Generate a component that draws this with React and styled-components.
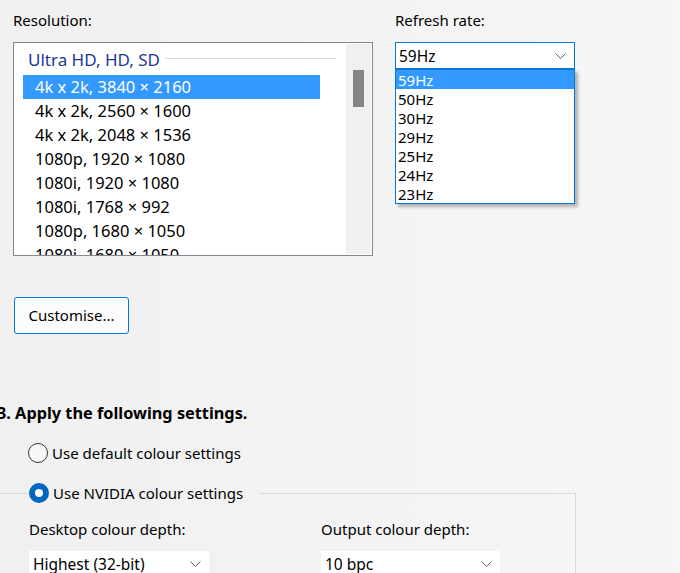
import React from 'react';
import styled, { createGlobalStyle } from 'styled-components';

const GlobalStyle = createGlobalStyle`
  html, body {
    margin: 0;
    padding: 0;
  }
  body {
    width: 680px;
    height: 573px;
    overflow: hidden;
    background: linear-gradient(to right, #f0f0f0, #f6f6f6);
    font-family: "Noto Sans", "Segoe UI", sans-serif;
    font-size: 15px;
    color: #000;
  }
`;

const Page = styled.div`
  position: relative;
  width: 680px;
  height: 573px;
  overflow: hidden;
`;

const TopRow = styled.div`
  display: flex;
  padding-left: 13px;
  gap: 22px;
`;

const Column = styled.div`
  display: flex;
  flex-direction: column;
  width: ${p => p.width}px;
`;

const Label = styled.div`
  height: 20px;
  line-height: 20px;
  margin-top: 10px;
  margin-bottom: 12px;
  white-space: nowrap;
`;

const ListBox = styled.div`
  display: flex;
  height: 212px;
  border: 1px solid #828790;
  background: #fff;
  overflow: hidden;
`;

const ListContent = styled.div`
  flex: 1;
  overflow: hidden;
`;

const GroupHeader = styled.div`
  display: flex;
  align-items: center;
  height: 32px;
  padding-left: 14px;
  padding-right: 10px;
  color: #1e3796;
  font-size: 17px;
  white-space: nowrap;

  &::after {
    content: '';
    flex: 1;
    height: 1px;
    margin-left: 5px;
    margin-top: -2px;
    background: #d3dced;
  }
`;

const Item = styled.div`
  height: 24px;
  line-height: 24px;
  width: 285px;
  margin-left: 9px;
  padding-left: 12px;
  white-space: nowrap;
  font-size: 16.5px;
  background: ${p => (p.selected ? '#3399ff' : 'transparent')};
  color: ${p => (p.selected ? '#fff' : '#000')};
`;

const ScrollTrack = styled.div`
  width: 25px;
  margin: 1px 1px 1px 0;
  background: #f0f0f0;
  display: flex;
  justify-content: center;
  padding-top: 26px;
  box-sizing: border-box;
`;

const ScrollThumb = styled.div`
  width: 11px;
  height: 37px;
  background: #858585;
`;

const ComboWrap = styled.div`
  position: relative;
`;

const Combo = styled.div`
  display: flex;
  align-items: center;
  justify-content: space-between;
  height: 25px;
  padding: 0 8px 0 3px;
  border: 1px solid #0078d7;
  background: #fff;
  font-size: 15.5px;
`;

const DropList = styled.div`
  position: absolute;
  top: 27px;
  left: 0;
  width: 178px;
  border: 1px solid #0078d7;
  background: #fff;
  box-shadow: 3px 3px 3px rgba(0, 0, 0, 0.28);
`;

const DropItem = styled.div`
  height: 19px;
  line-height: 20px;
  padding-left: 2px;
  font-size: 15px;
  background: ${p => (p.selected ? '#3399ff' : 'transparent')};
  color: ${p => (p.selected ? '#fff' : '#000')};
`;

const Button = styled.button`
  display: block;
  margin: 41px 0 0 14px;
  width: 115px;
  height: 37px;
  padding: 0 0 1px;
  border: 1px solid #0078d7;
  border-radius: 3px;
  background: #fcfcfc;
  font-family: inherit;
  font-size: 15px;
  color: #000;
  text-align: center;
`;

const Heading = styled.div`
  margin: 69px 0 0 -3px;
  height: 20px;
  line-height: 20px;
  font-weight: bold;
  font-size: 16.3px;
  white-space: nowrap;
`;

const RadioRow = styled.label`
  display: flex;
  align-items: center;
  gap: 4px;
  height: 20px;
  white-space: nowrap;
  font-size: 15px;
`;

const RadioCircle = styled.span`
  box-sizing: border-box;
  width: 20px;
  height: 20px;
  border-radius: 50%;
  display: flex;
  align-items: center;
  justify-content: center;
  border: ${p => (p.checked ? 'none' : '1px solid #333')};
  background: ${p => (p.checked ? '#0067c0' : '#f8f8f8')};

  &::after {
    content: '';
    display: ${p => (p.checked ? 'block' : 'none')};
    width: 8px;
    height: 8px;
    border-radius: 50%;
    background: #fff;
  }
`;

const FirstRadio = styled.div`
  margin: 20px 0 0 28px;
`;

const GroupBox = styled.fieldset`
  margin: 20px 0 0 -12px;
  width: 588px;
  height: 120px;
  padding: 0 0 0 40px;
  border: 1px solid #d9d9d9;
  border-bottom: none;
  box-sizing: border-box;
`;

const Legend = styled.legend`
  padding: 0 16px 0 0;
  margin: 0;
`;

const Columns = styled.div`
  display: flex;
  gap: 112px;
  margin-top: 16px;
`;

const SubLabel = styled.div`
  height: 20px;
  line-height: 20px;
  margin-bottom: 12px;
  white-space: nowrap;
`;

const Select = styled.div`
  display: flex;
  align-items: center;
  justify-content: space-between;
  box-sizing: border-box;
  width: ${p => p.width}px;
  height: 26px;
  padding: 0 8px 0 4px;
  background: #fff;
  font-size: 15.5px;
  white-space: nowrap;
`;

const Chevron = () => (
  <svg width="11" height="6" viewBox="0 0 11 6">
    <polyline points="0.5,0.5 5.5,5.5 10.5,0.5" fill="none" stroke="#606060" strokeWidth="1" />
  </svg>
);

const resolutions = [
  '4k x 2k, 3840 × 2160',
  '4k x 2k, 2560 × 1600',
  '4k x 2k, 2048 × 1536',
  '1080p, 1920 × 1080',
  '1080i, 1920 × 1080',
  '1080i, 1768 × 992',
  '1080p, 1680 × 1050',
  '1080i, 1680 × 1050',
];

const rates = ['59Hz', '50Hz', '30Hz', '29Hz', '25Hz', '24Hz', '23Hz'];

export default function App() {
  return (
    <Page>
      <GlobalStyle />
      <TopRow>
        <Column width={360}>
          <Label>Resolution:</Label>
          <ListBox>
            <ListContent>
              <GroupHeader>Ultra HD, HD, SD</GroupHeader>
              {resolutions.map((r, i) => (
                <Item key={r} selected={i === 0}>{r}</Item>
              ))}
            </ListContent>
            <ScrollTrack>
              <ScrollThumb />
            </ScrollTrack>
          </ListBox>
        </Column>
        <Column width={180}>
          <Label>Refresh rate:</Label>
          <ComboWrap>
            <Combo>
              <span>59Hz</span>
              <Chevron />
            </Combo>
            <DropList>
              {rates.map((r, i) => (
                <DropItem key={r} selected={i === 0}>{r}</DropItem>
              ))}
            </DropList>
          </ComboWrap>
        </Column>
      </TopRow>

      <Button>Customise...</Button>

      <Heading>3. Apply the following settings.</Heading>

      <FirstRadio>
        <RadioRow>
          <RadioCircle />
          Use default colour settings
        </RadioRow>
      </FirstRadio>

      <GroupBox>
        <Legend>
          <RadioRow>
            <RadioCircle checked />
            Use NVIDIA colour settings
          </RadioRow>
        </Legend>
        <Columns>
          <div>
            <SubLabel>Desktop colour depth:</SubLabel>
            <Select width={180}>
              <span>Highest (32-bit)</span>
              <Chevron />
            </Select>
          </div>
          <div>
            <SubLabel>Output colour depth:</SubLabel>
            <Select width={179}>
              <span>10 bpc</span>
              <Chevron />
            </Select>
          </div>
        </Columns>
      </GroupBox>
    </Page>
  );
}
